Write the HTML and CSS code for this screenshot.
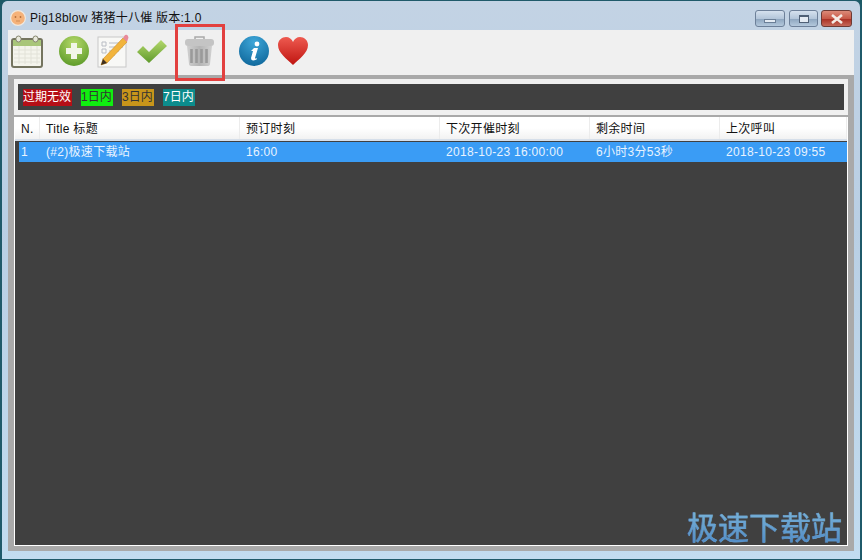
FILE: index.html
```html
<!DOCTYPE html>
<html lang="zh-CN">
<head>
    <meta charset="UTF-8">
    <title>Pig18blow 猪猪十八催 版本:1.0</title>
    <link rel="stylesheet" href="styles.css">
</head>
<body>
    <div class="window">
        <div class="titlebar">
            <svg class="app-icon" width="16" height="16" viewBox="0 0 16 16">
                <circle cx="8" cy="8" r="7.4" fill="#f5b27a" stroke="#efe9e0" stroke-width="1.2"/>
                <circle cx="5.5" cy="7" r=".9" fill="#b5703a"/>
                <circle cx="10.5" cy="7" r=".9" fill="#b5703a"/>
                <path d="M6 11h4" stroke="#d08c54" stroke-width="1"/>
            </svg>
            <span class="title-text">Pig18blow 猪猪十八催 版本:1.0</span>
            <div class="win-buttons">
                <div class="win-btn win-min"><span class="glyph-min"></span></div>
                <div class="win-btn win-max"><span class="glyph-max"></span></div>
                <div class="win-btn win-close">
                    <svg width="14" height="10" viewBox="0 0 14 10"><path d="M2 1l10 8M12 1L2 9" stroke="#f4ece6" stroke-width="2.6"/></svg>
                </div>
            </div>
        </div>

        <div class="client">
            <div class="toolbar">
                <svg class="tool tool-cal" width="32" height="33" viewBox="0 0 32 33">
                    <rect x="1" y="4" width="30" height="28" rx="2" fill="#f4f4ec" stroke="#74745f" stroke-width="2"/>
                    <rect x="2" y="5" width="28" height="6" fill="#a9c67a"/>
                    <path d="M3 15h26M3 19h26M3 23h26M3 27h26M8 11v18M14 11v18M20 11v18M26 11v18" stroke="#e2e2d8" stroke-width="1"/>
                    <rect x="5" y="1" width="5" height="6" rx="2.5" fill="#e8e8dc" stroke="#85856f"/>
                    <rect x="22" y="1" width="5" height="6" rx="2.5" fill="#e8e8dc" stroke="#85856f"/>
                </svg>
                <svg class="tool tool-add" width="30" height="30" viewBox="0 0 30 30">
                    <defs>
                        <radialGradient id="addFill" cx="0.5" cy="0.25" r="0.85"><stop offset="0" stop-color="#b5d96a"/><stop offset="1" stop-color="#549422"/></radialGradient>
                    </defs>
                    <circle cx="15" cy="15" r="15" fill="url(#addFill)"/>
                    <path d="M12 7h6v5h5v6h-5v5h-6v-5H7v-6h5z" fill="#f2f6e8"/>
                </svg>
                <svg class="tool tool-note" width="33" height="34" viewBox="0 0 33 34">
                    <rect x="1" y="3" width="28" height="30" fill="#f8f8f6" stroke="#c8c8c8"/>
                    <path d="M12 9h14M12 13h14M12 17h10M12 21h6M5 25h6" stroke="#b8bcc4" stroke-width="1"/>
                    <path d="M5 8h4v4H5zM5 15h4v4H5z" fill="none" stroke="#b8bcc4"/>
                    <path d="M26 4l4 4L10 29l-6 2 2-6z" fill="#f2b43c" stroke="#c98a1f" stroke-width=".6"/>
                    <path d="M26 4l2-3q2-1 3 1t0 3l-1 3z" fill="#e88a9a"/>
                    <path d="M6 25l-2 6 6-2z" fill="#403020"/>
                </svg>
                <svg class="tool tool-check" width="30" height="23" viewBox="0 0 30 23">
                    <defs>
                        <linearGradient id="checkFill" x1="0" y1="0" x2="0" y2="1"><stop offset="0" stop-color="#b4d86c"/><stop offset="1" stop-color="#5f9a2c"/></linearGradient>
                    </defs>
                    <path d="M0 12l6-6 6 6L24 0l6 6-18 17z" fill="url(#checkFill)"/>
                </svg>
                <svg class="tool tool-trash" width="29" height="30" viewBox="0 0 29 30">
                    <defs>
                        <linearGradient id="trashFill" x1="0" y1="0" x2="1" y2="0"><stop offset="0" stop-color="#cfcfcf"/><stop offset=".5" stop-color="#b4b4b4"/><stop offset="1" stop-color="#d0d0d0"/></linearGradient>
                    </defs>
                    <path d="M10 3V1h9v2" fill="none" stroke="#a8a8a8" stroke-width="1.5"/>
                    <rect x="0" y="3" width="29" height="7" rx="3" fill="#c4c4c4"/>
                    <path d="M2 10h25l-2 18q0 2-3 2H7q-3 0-3-2z" fill="url(#trashFill)"/>
                    <path d="M6.500 13v14M11.500 13v14M16.500 13v14M21.500 13v14" stroke="#9a9a9a" stroke-width="2.6"/>
                </svg>
                <svg class="tool tool-info" width="30" height="30" viewBox="0 0 30 30">
                    <defs>
                        <radialGradient id="infoFill" cx="0.5" cy="0.2" r="0.9"><stop offset="0" stop-color="#3ea6d8"/><stop offset="1" stop-color="#0b6296"/></radialGradient>
                    </defs>
                    <circle cx="15" cy="15" r="15" fill="url(#infoFill)"/>
                    <path d="M15 12h4l-3 10q0 1 2 0l-.4 1.600Q12 26 12 22l2-7h-2z" fill="#fff"/>
                    <circle cx="18" cy="8" r="2.400" fill="#fff"/>
                </svg>
                <svg class="tool tool-heart" width="30" height="28" viewBox="0 0 30 28">
                    <defs>
                        <linearGradient id="heartFill" x1="0" y1="0" x2="0" y2="1"><stop offset="0" stop-color="#ee5a50"/><stop offset="1" stop-color="#bf1410"/></linearGradient>
                    </defs>
                    <path d="M15 28C9 22 0 16 0 8 0 3 4 0 8 0c3 0 6 2 7 5 1-3 4-5 7-5 4 0 8 3 8 8 0 8-9 14-15 20z" fill="url(#heartFill)"/>
                </svg>
            </div>

            <div class="content">
                <div class="legend-panel">
                    <div class="legend">
                        <span class="tag tag-expired">过期无效</span>
                        <span class="tag tag-day1">1日内</span>
                        <span class="tag tag-day3">3日内</span>
                        <span class="tag tag-day7">7日内</span>
                    </div>
                </div>
                <div class="list">
                    <div class="list-head">
                        <div class="cell col-n">N.</div>
                        <div class="cell col-title">Title 标题</div>
                        <div class="cell col-time">预订时刻</div>
                        <div class="cell col-next">下次开催时刻</div>
                        <div class="cell col-left">剩余时间</div>
                        <div class="cell col-last">上次呼叫</div>
                    </div>
                    <div class="list-body">
                        <div class="list-row">
                            <div class="cell col-n">1</div>
                            <div class="cell col-title">(#2)极速下载站</div>
                            <div class="cell col-time">16:00</div>
                            <div class="cell col-next">2018-10-23 16:00:00</div>
                            <div class="cell col-left">6小时3分53秒</div>
                            <div class="cell col-last">2018-10-23 09:55</div>
                        </div>
                    </div>
                </div>
            </div>
        </div>

        <div class="highlight"></div>
        <div class="watermark">极速下载站</div>
    </div>
</body>
</html>
```

FILE: styles.css
```css
* {
    margin: 0;
    padding: 0;
    box-sizing: border-box;
    font-family: 'Liberation Sans', 'Noto Sans CJK SC', sans-serif;
}

body {
    width: 862px;
    height: 560px;
    overflow: hidden;
    background: #1c5a66;
}

.window {
    position: relative;
    width: 862px;
    height: 560px;
    display: flex;
    flex-direction: column;
    padding: 0 6px 8px;
    border: 1px solid #1f5a6a;
    border-left-width: 2px;
    border-right-width: 2px;
    border-radius: 7px 7px 0 0;
    background: linear-gradient(to bottom, #c3d3e4, #b9cfe4 40%, #c2dcf0);
    overflow: hidden;
}

/* title bar */
.titlebar {
    height: 29px;
    flex-shrink: 0;
    display: flex;
    align-items: center;
    gap: 4px;
    margin: 0 -6px 0 2px;
    padding-top: 5px;
}

.title-text {
    font-size: 12px;
    line-height: 16px;
    color: #111;
    letter-spacing: 0.25px;
}

.win-buttons {
    margin-left: auto;
    margin-right: 8px;
    display: flex;
    gap: 3px;
    align-self: flex-start;
    padding-top: 4px;
}

.win-btn {
    height: 17px;
    width: 29px;
    display: flex;
    align-items: center;
    justify-content: center;
    border: 1px solid #6d8099;
    border-radius: 3px;
    background: linear-gradient(to bottom, #d5e1ee, #b4c6da 50%, #8fa7c0 55%, #b4c8dc);
}

.win-min {
    width: 30px;
    margin-right: 1px;
}

.win-close {
    width: 31px;
    border-color: #6e3a34;
    background: linear-gradient(to bottom, #dc8a78, #c85a48 50%, #ab3226 55%, #c4695a);
}

.glyph-min {
    width: 12px;
    height: 4px;
    margin-top: 5px;
    background: #e4ebf3;
    border: 1px solid #6b7f97;
}

.glyph-max {
    width: 10px;
    height: 8px;
    background: #e4ebf3;
    border: 1px solid #4f6076;
    border-top-width: 2px;
}

/* toolbar */
.client {
    flex: 1;
    display: flex;
    flex-direction: column;
    min-height: 0;
}

.toolbar {
    height: 45px;
    flex-shrink: 0;
    display: flex;
    align-items: center;
    padding: 0 0 3px 3px;
    background: #f0f0f0;
}

.tool {
    flex-shrink: 0;
}

.tool-add {
    margin-left: 16px;
}

.tool-note {
    margin-left: 8px;
}

.tool-check {
    margin-left: 7px;
}

.tool-trash {
    margin-left: 18px;
}

.tool-info {
    margin-left: 25px;
}

.tool-heart {
    margin-left: 9px;
}

/* main part */
.content {
    flex: 1;
    min-height: 0;
    display: flex;
    flex-direction: column;
    background: #a9a9a9;
    padding: 4px 6px 5px;
}

.legend-panel {
    height: 36px;
    flex-shrink: 0;
    padding: 5px 4px;
    background: #f0f0f0;
}

.legend {
    height: 26px;
    display: flex;
    align-items: center;
    gap: 9px;
    padding-left: 5px;
    background: #404040;
}

.tag {
    height: 17px;
    line-height: 17px;
    font-size: 12px;
    white-space: nowrap;
}

.tag-expired {
    width: 49px;
    background: #b50f17;
    color: #fff;
}

.tag-day1 {
    width: 32px;
    background: #10ee10;
    color: #333;
}

.tag-day3 {
    width: 32px;
    background: #c8951a;
    color: #333;
}

.tag-day7 {
    width: 32px;
    background: #0c8c8c;
    color: #fff;
}

/* list */
.list {
    flex: 1;
    min-height: 0;
    display: flex;
    flex-direction: column;
    margin-top: 2px;
    border: 1px solid #fff;
    border-top: none;
}

.list-head {
    height: 24px;
    flex-shrink: 0;
    display: flex;
    color: #111;
    background: linear-gradient(to bottom, #fff, #fff 50%, #f2f2f2);
    border-bottom: 2px solid #d6dfea;
}

.list-body {
    flex: 1;
    min-height: 0;
    padding: 1px 0 0 4px;
    background: #404040;
}

.list-row {
    height: 20px;
    display: flex;
    background: #3a9cf5;
    color: #e8f3ff;
}

.cell {
    font-size: 12px;
    letter-spacing: 0.3px;
    white-space: nowrap;
}

.list-head .cell {
    line-height: 24px;
    padding-left: 6px;
    border-right: 1px solid #ececec;
}

.list-head .col-n {
    width: 25px;
}

.list-row .cell {
    line-height: 20px;
    padding-left: 2px;
}

.list-row .col-n {
    width: 25px;
}

.col-title,
.col-time {
    width: 200px;
}

.col-next {
    width: 150px;
}

.col-left {
    width: 130px;
}

.col-last {
    flex: 1;
}

/* annotations on top of the screenshot */
.highlight {
    position: absolute;
    left: 173px;
    top: 23px;
    width: 50px;
    height: 57px;
    border: 3px solid #e2403f;
}

.watermark {
    position: absolute;
    left: 685px;
    top: 510px;
    font-size: 31px;
    line-height: 36px;
    color: transparent;
    background: linear-gradient(to bottom, #7ab4d8, #4a86c6);
    -webkit-background-clip: text;
    background-clip: text;
    -webkit-text-stroke: 0.4px #6aa2d2;
}
```
